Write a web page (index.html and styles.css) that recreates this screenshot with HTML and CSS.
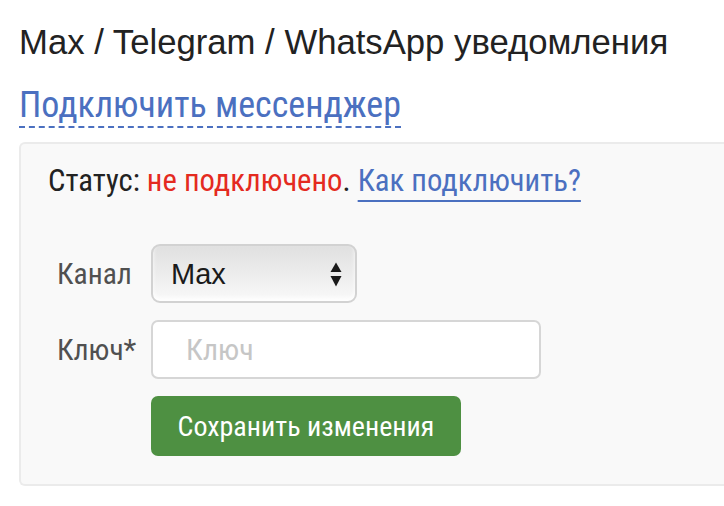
FILE: index.html
```html
<!DOCTYPE html>
<html lang="ru">
<head>
<meta charset="UTF-8">
<meta name="viewport" content="width=device-width, initial-scale=1.0">
<title>Уведомления</title>
<link rel="stylesheet" href="styles.css">
</head>
<body>
<div class="page">
    <h1 class="page-title">Max / Telegram / WhatsApp уведомления</h1>
    <a href="#" class="connect-link">Подключить мессенджер</a>
    <div class="panel">
        <div class="status">
            Статус: <span class="status-off">не подключено</span>. <a href="#" class="help-link">Как подключить?</a>
        </div>
        <form class="settings-form">
            <div class="form-row">
                <label class="form-label" for="channel">Канал</label>
                <div class="select-box">
                    <select id="channel">
                        <option>Max</option>
                        <option>Telegram</option>
                        <option>WhatsApp</option>
                    </select>
                    <span class="select-arrows">
                        <svg width="12" height="25" viewBox="0 0 12 25">
                            <path d="M6 0.5 L11.5 10 L0.5 10 Z" fill="#1a1a1a"/>
                            <path d="M0.5 14 L11.5 14 L6 24.5 Z" fill="#1a1a1a"/>
                        </svg>
                    </span>
                </div>
            </div>
            <div class="form-row">
                <label class="form-label" for="key">Ключ*</label>
                <input type="text" id="key" class="text-input" placeholder="Ключ">
            </div>
            <div class="form-row">
                <span class="form-label"></span>
                <button type="button" class="save-button">Сохранить изменения</button>
            </div>
        </form>
    </div>
</div>
</body>
</html>
```

FILE: styles.css
```css
body {
    margin: 0;
    background-color: #ffffff;
    font-family: "Roboto Condensed", Roboto, sans-serif;
}
.page {
    padding: 22px 0 0 19px;
}
.page-title {
    font-family: "Liberation Sans", Arial, sans-serif;
    font-weight: normal;
    font-size: 34.7px;
    line-height: 40px;
    color: #222222;
    margin: 0;
    white-space: nowrap;
}
.connect-link {
    display: block;
    width: fit-content;
    margin-top: 22px;
    font-size: 36px;
    line-height: 42px;
    color: #4b70c0;
    text-decoration: none;
    border-bottom: 2px dashed #4b70c0;
}
.panel {
    margin-top: 14px;
    background-color: #f9f9f9;
    border: 2px solid #ebebeb;
    border-right: none;
    border-radius: 6px 0 0 6px;
    padding: 19px 0 28px 27px;
}
.status {
    font-size: 30.7px;
    line-height: 36px;
    color: #222222;
    white-space: nowrap;
}
.status-off {
    color: #e42a20;
}
.help-link {
    color: #4b70c0;
    text-decoration: underline;
    text-decoration-thickness: 2px;
    text-underline-offset: 9px;
}
.settings-form {
    margin-top: 45px;
    display: flex;
    flex-direction: column;
    gap: 17px;
}
.form-row {
    display: flex;
    align-items: center;
}
.form-label {
    box-sizing: border-box;
    width: 103px;
    padding-left: 9px;
    font-size: 29.5px;
    color: #505050;
}
.select-box {
    position: relative;
    width: 206px;
    height: 59px;
}
.select-box select {
    -webkit-appearance: none;
    appearance: none;
    width: 100%;
    height: 100%;
    border: 2px solid #d2d2d2;
    border-radius: 9px;
    background: linear-gradient(#e0e0e0, #ebebeb 45%, #f9f9f9);
    box-shadow: inset 0 -3px 4px rgba(255, 255, 255, 0.9);
    padding: 0 0 0 18px;
    font-family: "Liberation Sans", Arial, sans-serif;
    font-size: 29px;
    color: #1a1a1a;
}
.select-arrows {
    position: absolute;
    right: 15px;
    top: 18px;
    line-height: 0;
    pointer-events: none;
}
.text-input {
    width: 390px;
    height: 59px;
    box-sizing: border-box;
    border: 2px solid #d6d6d6;
    border-radius: 7px;
    background-color: #ffffff;
    padding: 0 0 0 33px;
    font-family: "Roboto Condensed", Roboto, sans-serif;
    font-size: 30px;
}
.text-input::placeholder {
    color: #c6c6c6;
}
.save-button {
    width: 310px;
    height: 60px;
    background-color: #4e9042;
    border: none;
    border-radius: 7px;
    color: #ffffff;
    font-family: "Roboto Condensed", Roboto, sans-serif;
    font-size: 28px;
    cursor: pointer;
}
```
